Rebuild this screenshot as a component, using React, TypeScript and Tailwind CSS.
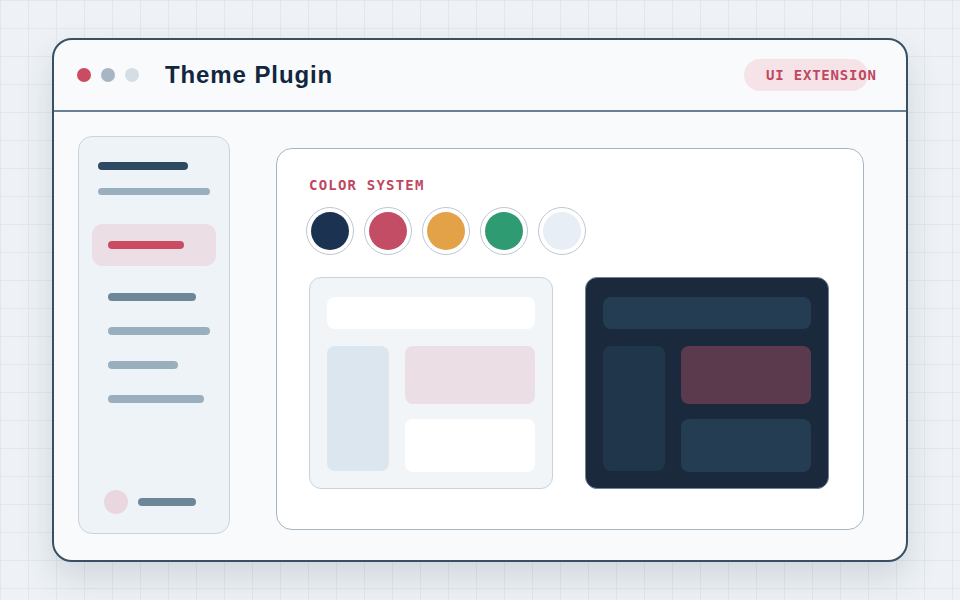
import React from 'react';

const swatches = ['#1b3350', '#c24d64', '#e3a248', '#2e9b73', '#e8eef5'];

const navLines = [
  { w: 'w-[88px]', c: 'bg-[#6e8797]' },
  { w: 'w-[102px]', c: 'bg-[#9aafbd]' },
  { w: 'w-[70px]', c: 'bg-[#9aafbd]' },
  { w: 'w-[96px]', c: 'bg-[#9aafbd]' },
];

function Sidebar() {
  return (
    <div className="flex h-[398px] w-[152px] shrink-0 flex-col rounded-[14px] border border-[#c8d3dd] bg-[#eef3f8] px-[13px] pt-[25px] pb-[19px]">
      <div className="ml-[6px] h-2 w-[90px] rounded-full bg-[#2e4a63]" />
      <div className="ml-[6px] mt-[18px] h-[7px] w-[112px] rounded-full bg-[#9aafbd]" />
      <div className="mt-[29px] flex h-[42px] items-center rounded-[10px] bg-[#ebdfe5] px-4">
        <div className="h-2 w-[76px] rounded-full bg-[#c94c63]" />
      </div>
      <div className="mt-[27px] flex flex-col gap-[26px] pl-4">
        {navLines.map((l, i) => (
          <div key={i} className={`h-2 rounded-full ${l.w} ${l.c}`} />
        ))}
      </div>
      <div className="mt-auto flex items-center gap-[10px] pl-3">
        <div className="h-6 w-6 rounded-full bg-[#ead6de]" />
        <div className="h-2 w-[58px] rounded-full bg-[#6e8797]" />
      </div>
    </div>
  );
}

function Preview({ dark }: { dark?: boolean }) {
  return (
    <div
      className={
        dark
          ? 'flex h-[212px] w-[244px] flex-col gap-[17px] rounded-[12px] border border-[#6f8497] bg-[#1a2a3c] px-[17px] pt-[19px]'
          : 'flex h-[212px] w-[244px] flex-col gap-[17px] rounded-[12px] border border-[#c8d3dd] bg-[#f1f5f8] px-[17px] pt-[19px]'
      }
    >
      <div className={`h-[32px] rounded-lg ${dark ? 'bg-[#253d52]' : 'bg-white'}`} />
      <div className="flex gap-4">
        <div className={`h-[125px] w-[62px] rounded-lg ${dark ? 'bg-[#20364a]' : 'bg-[#dce6ee]'}`} />
        <div className="flex flex-1 flex-col gap-[15px]">
          <div className={`h-[58px] rounded-lg ${dark ? 'bg-[#5c3a4e]' : 'bg-[#ebdfe5]'}`} />
          <div className={`h-[53px] rounded-lg ${dark ? 'bg-[#253d52]' : 'bg-white'}`} />
        </div>
      </div>
    </div>
  );
}

export default function App() {
  return (
    <div className="flex h-[600px] w-[960px] items-center justify-center bg-[#eef2f6] bg-[linear-gradient(#e1e7ee_1px,transparent_1px),linear-gradient(90deg,#e1e7ee_1px,transparent_1px)] bg-[size:28px_28px]">
      <div className="flex h-[524px] w-[856px] flex-col overflow-hidden rounded-[20px] border-2 border-[#3b4f63] bg-[#f8fafc] shadow-[0_16px_34px_rgba(30,50,70,0.14)]">
        <div className="flex h-[72px] shrink-0 items-center border-b-2 border-[#6b8094] pl-[23px] pr-[38px]">
          <div className="flex gap-[10px]">
            <div className="h-[14px] w-[14px] rounded-full bg-[#c94c63]" />
            <div className="h-[14px] w-[14px] rounded-full bg-[#a8b6c4]" />
            <div className="h-[14px] w-[14px] rounded-full bg-[#d5dde5]" />
          </div>
          <h1 className="ml-[26px] font-['Liberation_Sans',Arial,sans-serif] text-[24px] font-bold tracking-[0.9px] text-[#12263d]">
            Theme Plugin
          </h1>
          <div className="ml-auto flex h-8 w-[124px] items-center whitespace-nowrap rounded-full bg-[#f6e3e8] pl-[22px]">
            <span className="font-['DejaVu_Sans_Mono',monospace] text-[14px] font-bold tracking-[0.8px] text-[#c0475f]">
              UI EXTENSION
            </span>
          </div>
        </div>
        <div className="flex items-start pl-6 pt-6">
          <Sidebar />
          <div className="ml-[46px] mt-3 flex h-[382px] w-[588px] flex-col rounded-[16px] border border-[#a8b6c2] bg-white pl-8 pt-[28px]">
            <div className="font-['DejaVu_Sans_Mono',monospace] text-[14px] font-bold leading-4 tracking-[1.2px] text-[#c0475f]">
              COLOR SYSTEM
            </div>
            <div className="mt-[14px] flex gap-[10px] -ml-[3px]">
              {swatches.map((c) => (
                <div
                  key={c}
                  className="flex h-[48px] w-[48px] items-center justify-center rounded-full border border-[#bcc7d1] bg-white"
                >
                  <div className="h-[38px] w-[38px] rounded-full" style={{ backgroundColor: c }} />
                </div>
              ))}
            </div>
            <div className="mt-[22px] flex gap-8">
              <Preview />
              <Preview dark />
            </div>
          </div>
        </div>
      </div>
    </div>
  );
}
